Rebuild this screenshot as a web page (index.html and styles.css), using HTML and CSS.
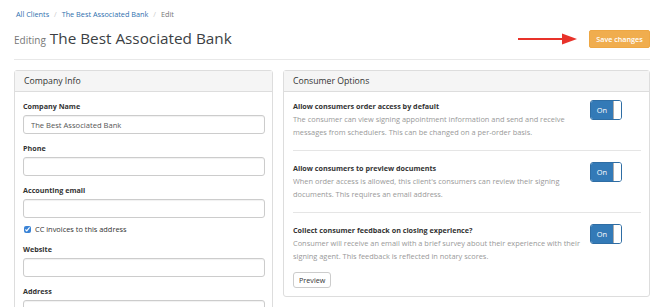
FILE: index.html
```html
<!DOCTYPE html>
<html lang="en">
<head>
  <meta charset="UTF-8" />
  <title>Edit Client</title>
  <link rel="stylesheet" href="styles.css">
</head>
<body>
  <div class="crumbs">
    <a href="#">All Clients</a>
    <span class="sep">/</span>
    <a href="#">The Best Associated Bank</a>
    <span class="sep">/</span>
    <span class="current">Edit</span>
  </div>

  <div class="page-head">
    <h1><small>Editing</small> The Best Associated Bank</h1>
    <div class="actions">
      <svg class="arrow" width="60" height="12" viewBox="0 0 60 12">
        <line x1="0" y1="6" x2="46" y2="6" stroke="#e8322a" stroke-width="2" />
        <polygon points="44,0.5 59,6 44,11.5" fill="#e8322a" />
      </svg>
      <button class="btn-save">Save changes</button>
    </div>
  </div>

  <div class="columns">
    <div class="panel">
      <div class="panel-heading">Company Info</div>
      <div class="panel-body form-body">
        <div class="field">
          <label>Company Name</label>
          <input type="text" value="The Best Associated Bank" />
        </div>
        <div class="field">
          <label>Phone</label>
          <input type="text" />
        </div>
        <div class="field">
          <label>Accounting email</label>
          <input type="text" />
          <div class="check">
            <input type="checkbox" checked />
            <span>CC invoices to this address</span>
          </div>
        </div>
        <div class="field">
          <label>Website</label>
          <input type="text" />
        </div>
        <div class="field">
          <label>Address</label>
          <input type="text" />
        </div>
      </div>
    </div>

    <div class="panel">
      <div class="panel-heading">Consumer Options</div>
      <div class="panel-body">
        <div class="option">
          <div>
            <div class="option-title">Allow consumers order access by default</div>
            <div class="option-desc">The consumer can view signing appointment information and send and receive messages from schedulers. This can be changed on a per-order basis.</div>
          </div>
          <div class="toggle"><span class="on">On</span><span class="knob"></span></div>
        </div>
        <div class="option">
          <div>
            <div class="option-title">Allow consumers to preview documents</div>
            <div class="option-desc">When order access is allowed, this client's consumers can review their signing documents. This requires an email address.</div>
          </div>
          <div class="toggle"><span class="on">On</span><span class="knob"></span></div>
        </div>
        <div class="option">
          <div>
            <div class="option-title">Collect consumer feedback on closing experience?</div>
            <div class="option-desc">Consumer will receive an email with a brief survey about their experience with their signing agent. This feedback is reflected in notary scores.</div>
            <button class="btn-default">Preview</button>
          </div>
          <div class="toggle"><span class="on">On</span><span class="knob"></span></div>
        </div>
      </div>
    </div>
  </div>
</body>
</html>
```

FILE: styles.css
```css
* {
  box-sizing: border-box;
}
body {
  margin: 0;
  background: #fff;
  color: #333;
  font-family: 'Open Sans', Arial, sans-serif;
  font-size: 7.4px;
}
.crumbs {
  padding: 9px 16px 0;
  line-height: 10px;
  font-size: 7.3px;
  color: #777;
}
.crumbs a {
  color: #2f6fae;
  text-decoration: none;
}
.crumbs .sep {
  color: #ccc;
  margin: 0 3px;
}
.page-head {
  display: flex;
  align-items: center;
  justify-content: space-between;
  margin: 0 20px 0 14px;
  padding: 9px 0;
  border-bottom: 1px solid #e8e8e8;
}
h1 {
  margin: 0;
  font-size: 15.3px;
  line-height: 20px;
  font-weight: 400;
  color: #3c3f44;
}
h1 small {
  font-size: 10px;
  color: #777;
}
.actions {
  display: flex;
  align-items: center;
  gap: 11px;
}
.btn-save {
  height: 18px;
  width: 61px;
  padding: 0;
  border: 1px solid #eea743;
  border-radius: 2px;
  background: #f0ad4e;
  color: #fff;
  font-family: inherit;
  font-size: 7.2px;
  font-weight: 600;
}
.columns {
  display: grid;
  grid-template-columns: 259px 367px;
  gap: 10px;
  margin: 10px 20px 0 14px;
  align-items: start;
}
.panel {
  border: 1px solid #ddd;
  border-radius: 3px;
  background: #fff;
}
.panel-heading {
  height: 21px;
  line-height: 20px;
  padding: 0 9px;
  background: #f5f5f5;
  border-bottom: 1px solid #ddd;
  font-size: 8.7px;
  color: #333;
}
.panel-body {
  padding: 8px 8px 8px 9px;
}
.form-body {
  padding: 8px 7px 8px 8px;
}
.field {
  margin-bottom: 8px;
}
.field label {
  display: block;
  font-weight: 700;
  font-size: 7.2px;
  line-height: 12px;
  margin-bottom: 3px;
}
.field input[type="text"] {
  display: block;
  width: 100%;
  height: 19px;
  padding: 0 7px;
  border: 1px solid #ccc;
  border-radius: 3px;
  box-shadow: inset 0 1px 1px rgba(0,0,0,0.06);
  font-family: inherit;
  font-size: 7.6px;
  color: #555;
}
.check {
  display: flex;
  align-items: center;
  gap: 4px;
  margin-top: 5px;
  line-height: 12px;
}
.check input {
  width: 7px;
  height: 7px;
  margin: 0 0 0 1px;
  accent-color: #3a83d6;
}
.option {
  display: grid;
  grid-template-columns: 1fr 51px;
  gap: 8px;
  padding: 11px 0;
  border-bottom: 1px solid #e5e5e5;
}
.option:first-child {
  padding-top: 0;
}
.option:last-child {
  border-bottom: none;
  padding-bottom: 0;
}
.option-title {
  font-weight: 700;
  font-size: 7.2px;
  line-height: 13px;
  color: #333;
}
.option-desc {
  line-height: 13px;
  color: #999;
}
.toggle {
  display: flex;
  width: 32px;
  height: 20px;
  border: 1px solid #2e6da4;
  border-radius: 3px;
  overflow: hidden;
}
.toggle .on {
  flex: 1;
  background: #337ab7;
  color: #fff;
  text-align: center;
  line-height: 18px;
  font-size: 7.4px;
}
.toggle .knob {
  width: 8px;
  background: #fff;
  border-left: 1px solid #adadad;
}
.btn-default {
  margin-top: 9px;
  height: 16px;
  padding: 0 5px;
  background: #fff;
  border: 1px solid #ccc;
  border-radius: 3px;
  font-family: inherit;
  font-size: 7.2px;
  color: #333;
}
```
